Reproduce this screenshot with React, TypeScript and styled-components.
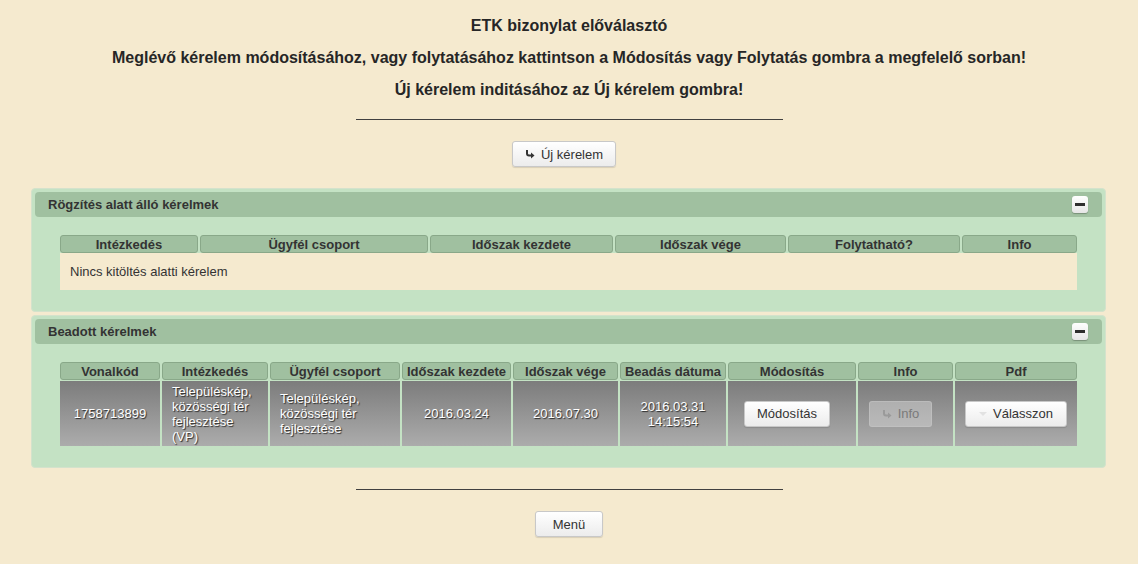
import React from 'react';
import styled, { createGlobalStyle } from 'styled-components';

const GlobalStyle = createGlobalStyle`
  body {
    margin: 0;
    background: #f5eacf;
    font-family: 'Liberation Sans', Arial, sans-serif;
    color: #333;
  }
`;

const Page = styled.div`
  padding-top: 10px;
  padding-bottom: 26px;
`;

const Heading = styled.p`
  margin: 0;
  text-align: center;
  font-size: 16px;
  line-height: 32px;
  font-weight: bold;
  color: #262626;
`;

const Rule = styled.div<{ $gap?: number }>`
  width: 427px;
  margin: ${p => p.$gap ?? 13}px auto 0;
  border-top: 1px solid #404040;
`;

const ButtonRow = styled.div`
  display: flex;
  justify-content: center;
  margin-top: 21px;
`;

// some buttons in the original carry a trailing spacer, which nudges them left
const Button = styled.button<{ $minWidth?: number; $spaced?: boolean }>`
  display: inline-flex;
  align-items: center;
  justify-content: center;
  gap: 6px;
  height: 26px;
  min-width: ${p => (p.$minWidth ? `${p.$minWidth}px` : 'auto')};
  margin-right: ${p => (p.$spaced ? '10px' : '0')};
  padding: 0 12px;
  font-family: 'Liberation Sans', Arial, sans-serif;
  font-size: 13px;
  color: #333;
  background: linear-gradient(#ffffff, #ececec);
  border: 1px solid #c8c8c8;
  border-radius: 3px;
  box-shadow: 0 1px 1px rgba(0, 0, 0, 0.12);
  cursor: pointer;

  &:disabled {
    color: #7a7a7a;
    background: rgba(220, 220, 220, 0.45);
    border-color: rgba(200, 200, 200, 0.5);
    box-shadow: none;
    cursor: default;
  }
`;

const Panel = styled.section<{ $first?: boolean }>`
  margin: ${p => (p.$first ? '21px' : '3px')} 32px 0 31px;
  padding: 3px;
  background: #c4e2c4;
  border: 1px solid #d4e2cc;
  border-radius: 4px;
`;

const PanelHeader = styled.div`
  height: 25px;
  display: flex;
  align-items: center;
  justify-content: space-between;
  padding: 0 14px 0 13px;
  background: #a0c0a0;
  border-radius: 4px;
  font-size: 13px;
  font-weight: bold;
  color: #333;
`;

const CollapseButton = styled.span`
  width: 16px;
  height: 17px;
  display: flex;
  align-items: center;
  justify-content: center;
  background: linear-gradient(#ffffff, #e6e6e6);
  border-radius: 3px;
  box-shadow: 0 1px 1px rgba(0, 0, 0, 0.25);

  &::after {
    content: '';
    width: 10px;
    height: 3px;
    background: #2e2e2e;
  }
`;

const PanelBody = styled.div`
  padding: 18px 25px;
`;

const Grid = styled.div<{ $cols: string }>`
  display: grid;
  grid-template-columns: ${p => p.$cols};
  column-gap: 2px;
`;

const HeadCell = styled.div`
  height: 18px;
  box-sizing: border-box;
  display: flex;
  align-items: center;
  justify-content: center;
  background: #a0c0a0;
  border: 1px solid #89a889;
  border-radius: 3px;
  font-size: 13px;
  font-weight: bold;
  color: #333;
  white-space: nowrap;
`;

const EmptyRow = styled.div`
  grid-column: 1 / -1;
  height: 37px;
  display: flex;
  align-items: center;
  padding-left: 10px;
  background: #f5eacf;
  font-size: 13px;
  color: #333;
`;

const DataCell = styled.div<{ $align?: 'left' | 'center' }>`
  height: 65px;
  box-sizing: border-box;
  overflow: hidden;
  display: flex;
  align-items: center;
  justify-content: ${p => (p.$align === 'left' ? 'flex-start' : 'center')};
  text-align: ${p => p.$align ?? 'center'};
  padding: 0 10px;
  margin-top: 1px;
  background: linear-gradient(#7c7c7c, #acacac);
  font-size: 13px;
  line-height: 15px;
  color: #fff;
  text-shadow: 1px 1px 1px #2a2a2a;
`;

const Caret = styled.span`
  width: 0;
  height: 0;
  border-left: 4px solid transparent;
  border-right: 4px solid transparent;
  border-top: 4px solid #e2e2e2;
`;

const ReturnIcon: React.FC<{ color?: string }> = ({ color = '#333' }) => (
  <svg width="10" height="10" viewBox="0 0 10 10">
    <path d="M2 1 V4.5 Q2 6.5 4 6.5 H6.5" fill="none" stroke={color} strokeWidth="2" />
    <path d="M6 3.5 L9.5 6.5 L6 9.5 Z" fill={color} />
  </svg>
);

const draftColumns = '138px 228px 183px 171px 172px 1fr';
const submittedColumns = '100px 106px 130px 109px 105px 106px 128px 95px 1fr';

const App: React.FC = () => {
  return (
    <Page>
      <GlobalStyle />
      <Heading>ETK bizonylat előválasztó</Heading>
      <Heading>
        Meglévő kérelem módosításához, vagy folytatásához kattintson a Módosítás vagy Folytatás gombra a megfelelő sorban!
      </Heading>
      <Heading>Új kérelem inditásához az Új kérelem gombra!</Heading>
      <Rule />
      <ButtonRow>
        <Button $spaced>
          <ReturnIcon />
          Új kérelem
        </Button>
      </ButtonRow>

      <Panel $first>
        <PanelHeader>
          Rögzítés alatt álló kérelmek
          <CollapseButton />
        </PanelHeader>
        <PanelBody>
          <Grid $cols={draftColumns}>
            <HeadCell>Intézkedés</HeadCell>
            <HeadCell>Ügyfél csoport</HeadCell>
            <HeadCell>Időszak kezdete</HeadCell>
            <HeadCell>Időszak vége</HeadCell>
            <HeadCell>Folytatható?</HeadCell>
            <HeadCell>Info</HeadCell>
            <EmptyRow>Nincs kitöltés alatti kérelem</EmptyRow>
          </Grid>
        </PanelBody>
      </Panel>

      <Panel>
        <PanelHeader>
          Beadott kérelmek
          <CollapseButton />
        </PanelHeader>
        <PanelBody>
          <Grid $cols={submittedColumns}>
            <HeadCell>Vonalkód</HeadCell>
            <HeadCell>Intézkedés</HeadCell>
            <HeadCell>Ügyfél csoport</HeadCell>
            <HeadCell>Időszak kezdete</HeadCell>
            <HeadCell>Időszak vége</HeadCell>
            <HeadCell>Beadás dátuma</HeadCell>
            <HeadCell>Módosítás</HeadCell>
            <HeadCell>Info</HeadCell>
            <HeadCell>Pdf</HeadCell>

            <DataCell>1758713899</DataCell>
            <DataCell $align="left">Településkép, közösségi tér fejlesztése (VP)</DataCell>
            <DataCell $align="left">Településkép, közösségi tér fejlesztése</DataCell>
            <DataCell>2016.03.24</DataCell>
            <DataCell>2016.07.30</DataCell>
            <DataCell>
              2016.03.31
              <br />
              14:15:54
            </DataCell>
            <DataCell>
              <Button $spaced>Módosítás</Button>
            </DataCell>
            <DataCell>
              <Button disabled $spaced>
                <ReturnIcon color="#9a9a9a" />
                Info
              </Button>
            </DataCell>
            <DataCell>
              <Button $minWidth={102}>
                <Caret />
                Válasszon
              </Button>
            </DataCell>
          </Grid>
        </PanelBody>
      </Panel>

      <Rule $gap={21} />
      <ButtonRow>
        <Button $minWidth={68}>Menü</Button>
      </ButtonRow>
    </Page>
  );
};

export default App;
